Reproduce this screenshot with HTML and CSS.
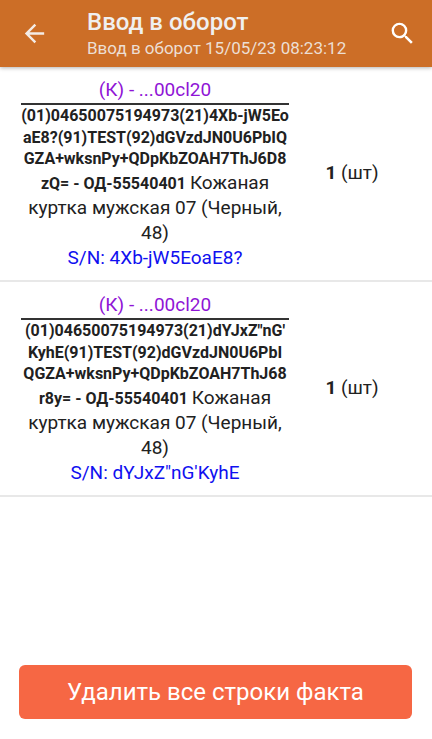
FILE: index.html
```html
<!DOCTYPE html>
<html lang="ru">
<head>
  <meta charset="UTF-8">
  <title>Ввод в оборот</title>
  <link rel="stylesheet" href="styles.css">
</head>
<body>
  <header class="toolbar">
    <svg class="icon-back" width="29" height="29" viewBox="0 0 24 24"><path d="M20 11H7.83l5.59-5.59L12 4l-8 8 8 8 1.41-1.41L7.83 13H20v-2z"/></svg>
    <div class="toolbar-titles">
      <div class="toolbar-title">Ввод в оборот</div>
      <div class="toolbar-sub">Ввод в оборот 15/05/23 08:23:12</div>
    </div>
    <svg class="icon-search" width="29" height="29" viewBox="0 0 24 24"><path d="M15.5 14h-.79l-.28-.27A6.47 6.47 0 0 0 16 9.5 6.5 6.5 0 1 0 9.5 16c1.61 0 3.09-.59 4.23-1.57l.27.28v.79l5 4.99L20.49 19l-4.99-5zm-6 0C7.01 14 5 11.99 5 9.5S7.01 5 9.5 5 14 7.01 14 9.5 11.99 14 9.5 14z"/></svg>
  </header>

  <div class="rows">
    <div class="row">
      <div class="row-main">
        <div class="row-code">(К) - ...00cl20</div>
        <div class="row-desc"><b>(01)04650075194973(21)4Xb-jW5EoaE8?(91)TEST(92)dGVzdJN0U6PbIQGZA+wksnPy+QDpKbZOAH7ThJ6D8zQ=</b> <b>-</b> <b>ОД-55540401</b> <span class="row-name">Кожаная куртка мужская 07 (Черный, 48)</span></div>
        <div class="row-sn">S/N: 4Xb-jW5EoaE8?</div>
      </div>
      <div class="row-qty"><b>1</b> (шт)</div>
    </div>
    <div class="row">
      <div class="row-main">
        <div class="row-code">(К) - ...00cl20</div>
        <div class="row-desc"><b>(01)04650075194973(21)dYJxZ"nG'<wbr>KyhE(91)TEST(92)dGVzdJN0U6PbI<br>QGZA+wksnPy+QDpKbZOAH7ThJ68r8y=</b> <b>-</b> <b>ОД-55540401</b> <span class="row-name">Кожаная куртка мужская 07 (Черный, 48)</span></div>
        <div class="row-sn">S/N: dYJxZ"nG'KyhE</div>
      </div>
      <div class="row-qty"><b>1</b> (шт)</div>
    </div>
  </div>

  <div class="footer">
    <button class="btn-delete">Удалить все строки факта</button>
  </div>
</body>
</html>
```

FILE: styles.css
```css
html, body {
  height: 100%;
}

body {
  margin: 0;
  font-family: Roboto, sans-serif;
  background: #fff;
  color: #212121;
  display: flex;
  flex-direction: column;
  height: 739px;
  overflow: hidden;
}

.toolbar {
  background: #cc6e27;
  height: 67px;
  display: flex;
  align-items: center;
  padding: 0 15px 0 20px;
  box-shadow: 0 1px 4px rgba(0,0,0,0.3);
  color: #fff;
}

.icon-back,
.icon-search {
  fill: #fff;
  flex: none;
}

.icon-back {
  fill: #f4ece6;
}

.toolbar-titles {
  flex: 1;
  margin-left: 38px;
  margin-top: -1px;
}

.toolbar-title {
  font-size: 24px;
  font-weight: 500;
  line-height: 30px;
  color: #f0f0f0;
}

.toolbar-sub {
  font-size: 17px;
  line-height: 22px;
  color: #ecdfd4;
}

.rows {
  flex: 1;
}

.row {
  display: flex;
  align-items: center;
  padding: 9px 0 10.5px 21px;
  border-bottom: 2px solid #e8e8e8;
}

.row-main {
  width: 268px;
  text-align: center;
  font-size: 19px;
  line-height: 25px;
}

.row-code {
  color: #8f14d6;
  border-bottom: 2px solid #333;
  line-height: 27px;
}

.row-desc {
  font-size: 16px;
  line-height: 21.5px;
}

.row-desc b {
  word-break: break-all;
}

.row-name {
  font-size: 19px;
  line-height: 25px;
}

.row-sn {
  color: #1010f0;
}

.row-qty {
  flex: 1;
  text-align: center;
  font-size: 19px;
  padding-right: 17px;
}

.footer {
  padding: 0 20px 20px 19px;
}

.btn-delete {
  display: block;
  width: 100%;
  height: 54px;
  border: none;
  border-radius: 6px;
  background: #f66744;
  color: #fff;
  font-family: Roboto, sans-serif;
  font-size: 24px;
}
```
